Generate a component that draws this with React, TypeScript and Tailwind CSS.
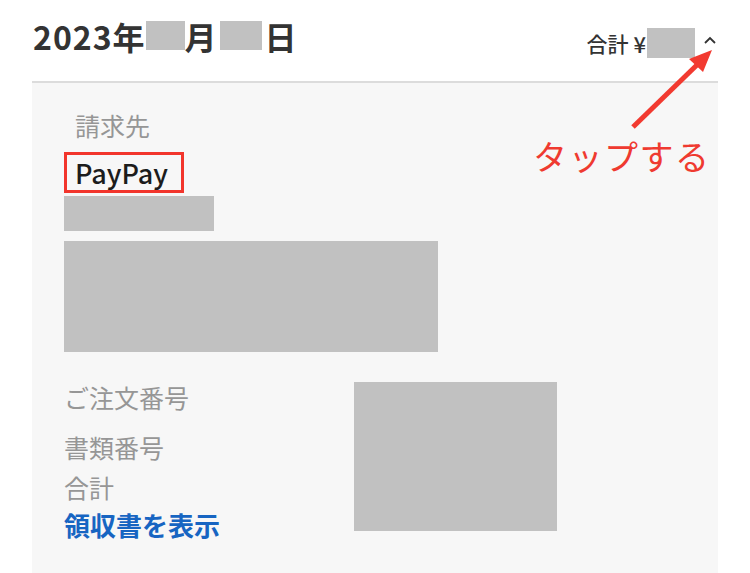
import React from "react";

const font = { fontFamily: '"Noto Sans CJK JP", "Noto Sans", sans-serif' };

function Box({ className }: { className: string }) {
  return <div className={`bg-[#c1c1c1] ${className}`} />;
}

export default function App() {
  return (
    <div
      className="relative w-[750px] h-[573px] bg-white overflow-hidden"
      style={font}
    >
      {/* Header */}
      <div className="flex items-center justify-between h-[81px] pl-[33px] pr-[33px]">
        <div className="flex items-center text-[32px] font-bold text-[#333] leading-none tracking-[1px] -mt-[10px]">
          <span>2023年</span>
          <Box className="w-[39px] h-[29px]" />
          <span>月</span>
          <Box className="w-[42px] h-[29px] ml-[2px]" />
          <span className="ml-[3px]">日</span>
        </div>
        <div className="flex items-center text-[21px] font-medium text-[#333] leading-none mt-[5px]">
          <span>合計</span>
          <span className="ml-[5px] text-[22px]">¥</span>
          <Box className="w-[48px] h-[30px] ml-[1px]" />
          <svg width="14" height="10" viewBox="0 0 14 10" className="ml-[8px] -mt-[4px]">
            <path d="M2 7 L7 2 L12 7" fill="none" stroke="#333" strokeWidth="1.8" />
          </svg>
        </div>
      </div>
      <div className="mx-[32px] h-[2px] bg-[#dcdcdc]" />

      {/* Panel */}
      <div className="mx-[32px] h-[490px] bg-[#f7f7f7] pl-[32px] pt-[26px]">
        <div className="ml-[11px] text-[25px] leading-[32px] text-[#969696]">請求先</div>
        <div className="mt-[11px] w-[120px] h-[41px] border-[3px] border-[#f2352c] flex items-center pl-[8px]">
          <span className="text-[27px] font-medium text-[#1c1c1c] leading-none">PayPay</span>
        </div>
        <Box className="mt-[3px] w-[150px] h-[35px]" />
        <Box className="mt-[10px] w-[374px] h-[111px]" />

        <div className="flex mt-[30px]">
          <div className="w-[290px] flex flex-col -mt-[1px]">
            <div className="text-[25px] leading-[32px] text-[#969696]">ご注文番号</div>
            <div className="mt-[18px] text-[25px] leading-[32px] text-[#969696]">書類番号</div>
            <div className="mt-[8px] text-[25px] leading-[32px] text-[#969696]">合計</div>
            <div className="mt-[6px] text-[26px] leading-[32px] font-bold text-[#1765c2]">領収書を表示</div>
          </div>
          <Box className="w-[203px] h-[149px]" />
        </div>
      </div>

      {/* Annotation */}
      <div className="absolute left-[533px] top-[134px] text-[34px] leading-[44px] text-[#ef3a30] tracking-[1.5px]">
        タップする
      </div>
      <svg className="absolute left-0 top-0" width="750" height="573" viewBox="0 0 750 573">
        <line x1="633" y1="127" x2="700" y2="62" stroke="#f23a30" strokeWidth="5" strokeLinecap="butt" />
        <polygon points="712,50 689,59 703,72" fill="#f23a30" />
      </svg>
    </div>
  );
}
